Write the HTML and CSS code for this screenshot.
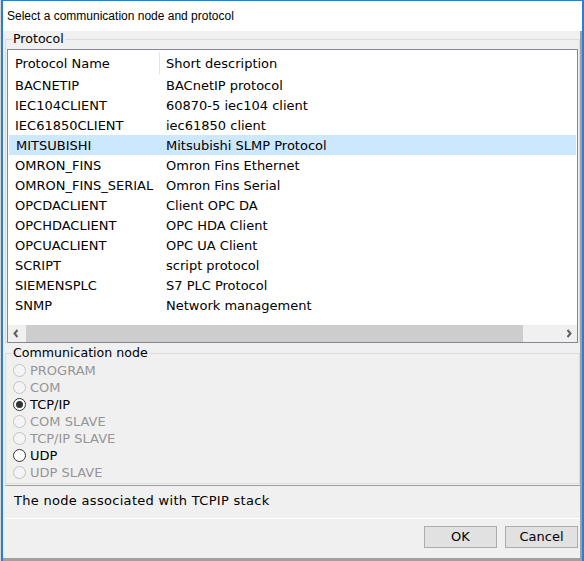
FILE: index.html
```html
<!DOCTYPE html>
<html>
<head>
<meta charset="utf-8">
<link rel="stylesheet" href="styles.css">
</head>
<body>
<div class="window">
  <div class="titlebar">Select a communication node and protocol</div>
  <div class="client">
    <fieldset class="group group-protocol">
      <legend>Protocol</legend>
      <div class="list">
        <div class="list-head">
          <div class="cell c1 head-c1">Protocol Name</div>
          <div class="cell c2 head-c2">Short description</div>
        </div>
        <div class="rows">
          <div class="row"><div class="cell c1">BACNETIP</div><div class="cell c2">BACnetIP protocol</div></div>
          <div class="row"><div class="cell c1">IEC104CLIENT</div><div class="cell c2">60870-5 iec104 client</div></div>
          <div class="row"><div class="cell c1">IEC61850CLIENT</div><div class="cell c2">iec61850 client</div></div>
          <div class="row selected"><div class="cell c1">MITSUBISHI</div><div class="cell c2">Mitsubishi SLMP Protocol</div></div>
          <div class="row"><div class="cell c1">OMRON_FINS</div><div class="cell c2">Omron Fins Ethernet</div></div>
          <div class="row"><div class="cell c1">OMRON_FINS_SERIAL</div><div class="cell c2">Omron Fins Serial</div></div>
          <div class="row"><div class="cell c1">OPCDACLIENT</div><div class="cell c2">Client OPC DA</div></div>
          <div class="row"><div class="cell c1">OPCHDACLIENT</div><div class="cell c2">OPC HDA Client</div></div>
          <div class="row"><div class="cell c1">OPCUACLIENT</div><div class="cell c2">OPC UA Client</div></div>
          <div class="row"><div class="cell c1">SCRIPT</div><div class="cell c2">script protocol</div></div>
          <div class="row"><div class="cell c1">SIEMENSPLC</div><div class="cell c2">S7 PLC Protocol</div></div>
          <div class="row"><div class="cell c1">SNMP</div><div class="cell c2">Network management</div></div>
        </div>
        <div class="hscroll">
          <div class="sb-btn sb-left"><svg width="18" height="17" viewBox="0 0 18 17"><polyline points="9.5,5 6.5,8.5 9.5,12" fill="none" stroke="#606060" stroke-width="2"/></svg></div>
          <div class="sb-thumb"></div>
          <div class="sb-track"></div>
          <div class="sb-btn sb-right"><svg width="17" height="17" viewBox="0 0 17 17"><polyline points="7.5,5 10.5,8.5 7.5,12" fill="none" stroke="#606060" stroke-width="2"/></svg></div>
        </div>
      </div>
    </fieldset>
    <fieldset class="group group-node">
      <legend>Communication node</legend>
      <div class="radio disabled"><span class="dot"></span><span>PROGRAM</span></div>
      <div class="radio disabled"><span class="dot"></span><span>COM</span></div>
      <div class="radio checked"><span class="dot"></span><span>TCP/IP</span></div>
      <div class="radio disabled"><span class="dot"></span><span>COM SLAVE</span></div>
      <div class="radio disabled"><span class="dot"></span><span>TCP/IP SLAVE</span></div>
      <div class="radio"><span class="dot"></span><span>UDP</span></div>
      <div class="radio disabled"><span class="dot"></span><span>UDP SLAVE</span></div>
    </fieldset>
    <div class="desc">The node associated with TCPIP stack</div>
    <div class="buttons">
      <div class="btn">OK</div>
      <div class="btn">Cancel</div>
    </div>
  </div>
</div>
</body>
</html>
```
FILE: styles.css
```css
* { box-sizing: border-box; }
html, body { margin: 0; padding: 0; }
body {
  background: #d6d8da;
  width: 584px;
  height: 561px;
  overflow: hidden;
  font-family: "DejaVu Sans", sans-serif;
  font-size: 13px;
  color: #000;
}
.window {
  margin-left: 1px;
  width: 583px;
  height: 561px;
  border-top: 1px solid #2a7fd4;
  border-left: 2px solid #2a7fd4;
  border-right: 2px solid #2a7fd4;
  display: flex;
  flex-direction: column;
  background: #fff;
}
.titlebar {
  height: 30px;
  flex: none;
  background: #fff;
  font-family: "Liberation Sans", Arial, sans-serif;
  font-size: 12px;
  padding-left: 4px;
  display: flex;
  align-items: center;
}
.client {
  flex: 1;
  background: #f0f0f0;
  border-right: 2px solid #a0a0a0;
  border-bottom: 3px solid #a0a0a0;
  display: flex;
  flex-direction: column;
}
.group {
  margin: 0 0 0 2px;
  width: 575px;
  padding: 0;
  border: 1px solid #dcdcdc;
  min-inline-size: 0;
  flex: none;
}
.group legend {
  margin-left: 6px;
  padding: 0 1px;
  height: 16px;
  line-height: 16px;
  font-size: 12.6px;
}
.group-protocol {
  border-bottom: none;
  padding-top: 2px;
}
.list {
  margin: 0 1px;
  height: 294px;
  border: 1px solid #828790;
  background: #fff;
  display: flex;
  flex-direction: column;
}
.list-head {
  height: 25px;
  display: grid;
  grid-template-columns: 152px 1fr;
  align-items: center;
  flex: none;
}
.cell { white-space: nowrap; overflow: hidden; }
.c1 { padding-left: 7px; }
.c2 { padding-left: 6px; }
.head-c1, .head-c2 {
  height: 22px;
  line-height: 21px;
  padding-top: 1px;
}
.head-c1 { border-right: 1px solid #e5e5e5; }
.rows { flex: 1; }
.row {
  height: 20px;
  padding-top: 1px;
  display: grid;
  grid-template-columns: 152px 1fr;
}
.row .cell { line-height: 19px; }
.row.selected {
  background: #cce8ff;
  margin: 0 1px;
  grid-template-columns: 151px 1fr;
}
.hscroll {
  height: 17px;
  flex: none;
  display: flex;
  background: #f0f0f0;
}
.sb-btn { flex: none; height: 17px; }
.sb-btn svg { display: block; }
.sb-left { width: 18px; }
.sb-right { width: 17px; }
.sb-thumb { width: 497px; height: 17px; background: #cdcdcd; flex: none; }
.sb-track { flex: 1; }
.group-node {
  margin-top: 2px;
  padding: 1px 0 2px 0;
}
.radio {
  height: 17px;
  display: flex;
  align-items: center;
  gap: 4px;
  margin-left: 7px;
}
.dot {
  width: 13px;
  height: 13px;
  border-radius: 50%;
  border: 1px solid #333;
  background: #fff;
  display: flex;
  align-items: center;
  justify-content: center;
  flex: none;
}
.radio.disabled { color: #959595; }
.radio.disabled .dot { border-color: #c2c2c2; background: #f4f4f4; }
.radio.checked .dot::after {
  content: "";
  width: 7px;
  height: 7px;
  border-radius: 50%;
  background: #333;
}
.desc {
  margin: 1px 0 0 2px;
  height: 34px;
  flex: none;
  border-top: 1px solid #a0a0a0;
  border-bottom: 1px solid #fff;
  padding: 0 0 4px 9px;
  letter-spacing: 0.3px;
  display: flex;
  align-items: center;
}
.buttons {
  flex: 1;
  display: flex;
  justify-content: flex-end;
  align-items: flex-start;
  gap: 8px;
  padding: 7px 2px 0 0;
}
.btn {
  width: 73px;
  height: 22px;
  border: 1px solid #adadad;
  background: #e1e1e1;
  text-align: center;
  line-height: 20px;
}
```
